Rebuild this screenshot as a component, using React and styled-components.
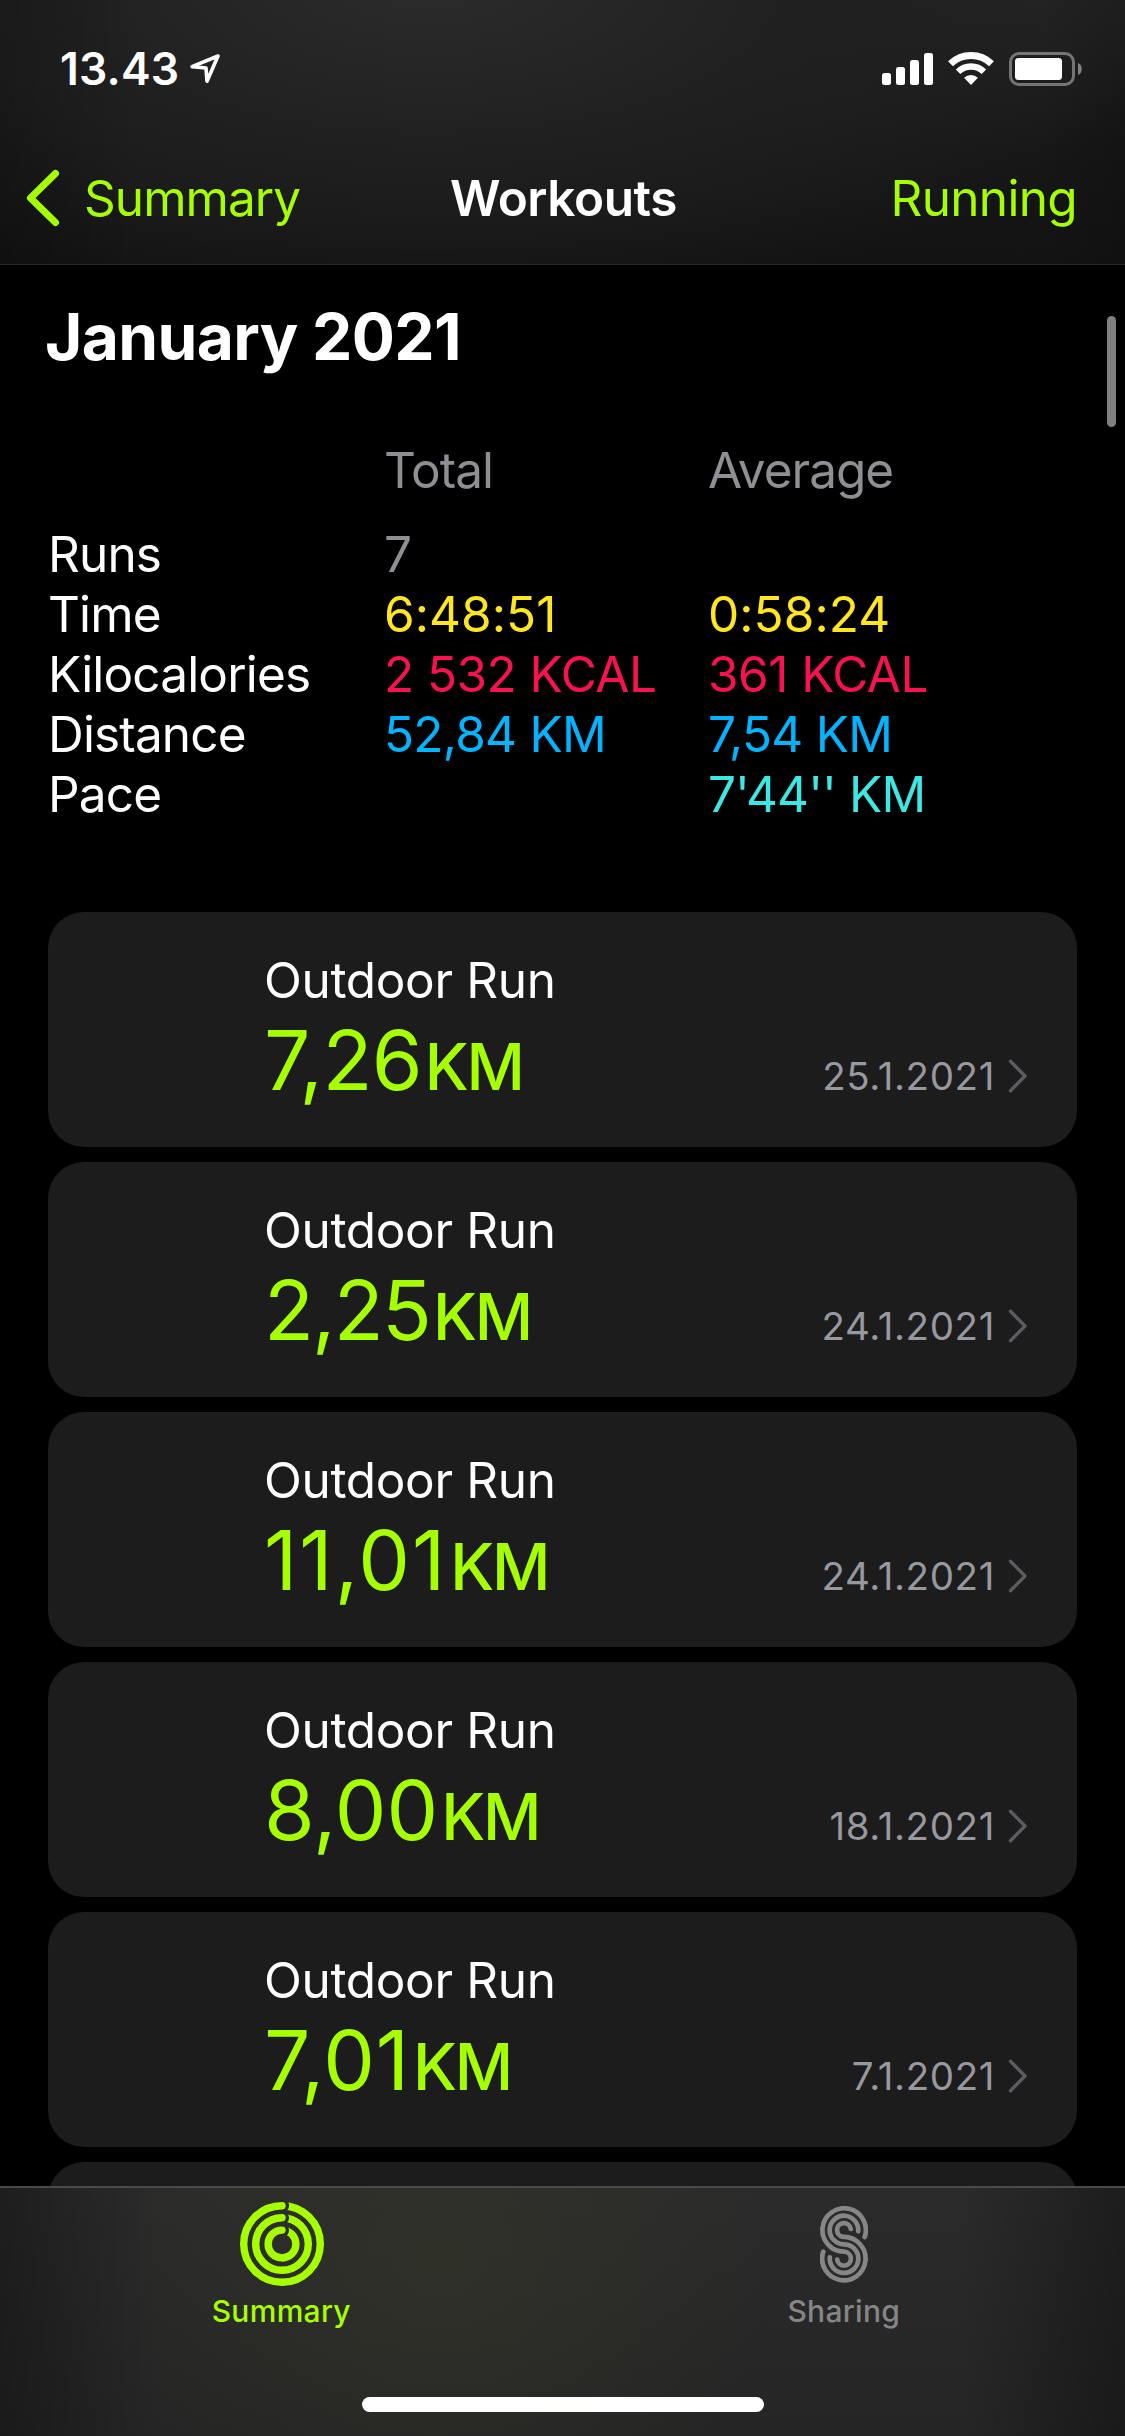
import React from 'react';
import styled, { createGlobalStyle } from 'styled-components';

const GlobalStyle = createGlobalStyle`
  * {
    box-sizing: border-box;
  }

  body {
    margin: 0;
    background: #000;
    font-family: Inter, "Liberation Sans", sans-serif;
    font-feature-settings: 'calt' 0;
    -webkit-font-smoothing: antialiased;
  }
`;

const stats = [
  { label: 'Runs', total: '7', color: '#8e8e93', spacing: '-0.02em' },
  { label: 'Time', total: '6:48:51', average: '0:58:24', color: '#ffe620', spacing: '0.001em' },
  { label: 'Kilocalories', total: '2 532 KCAL', average: '361 KCAL', color: '#fa114f', spacing: '-0.011em' },
  { label: 'Distance', total: '52,84 KM', average: '7,54 KM', color: '#00b4ff', spacing: '-0.015em' },
  { label: 'Pace', average: "7'44'' KM", color: '#3ce8e4', spacing: '-0.018em' },
];

const workouts = [
  { distance: '7,26', date: '25.1.2021', spacing: '-0.7px' },
  { distance: '2,25', date: '24.1.2021', spacing: '-1.9px' },
  { distance: '11,01', date: '24.1.2021', spacing: '2px' },
  { distance: '8,00', date: '18.1.2021', spacing: '0.1px' },
  { distance: '7,01', date: '7.1.2021', spacing: '0.8px' },
];

const LocationIcon = () => (
  <svg width="32" height="32" viewBox="0 0 32 32" fill="none" stroke="#fff" strokeWidth="3.6" strokeLinejoin="round">
    <path d="M29 3 L3 13.6 L17 15 L18 28.2 Z" />
  </svg>
);

const SignalIcon = () => (
  <svg width="51" height="32" viewBox="0 0 51 32" fill="#fff">
    <rect x="0" y="20" width="9" height="12" rx="2.5" />
    <rect x="14" y="14" width="9" height="18" rx="2.5" />
    <rect x="28" y="7" width="9" height="25" rx="2.5" />
    <rect x="42" y="0" width="9" height="32" rx="2.5" />
  </svg>
);

const WifiIcon = () => (
  <svg width="46" height="34" viewBox="0 0 46 34" fill="none" stroke="#fff">
    <path d="M2.5 11.8 A29.5 29.5 0 0 1 43.5 11.8" strokeWidth="7" />
    <path d="M10.1 19.7 A18.5 18.5 0 0 1 35.9 19.7" strokeWidth="6.4" />
    <path d="M16.1 25.8 A10 10 0 0 1 29.9 25.8 L23 33 Z" fill="#fff" stroke="none" />
  </svg>
);

const BatteryIcon = () => (
  <svg width="74" height="34" viewBox="0 0 74 34">
    <rect x="1.5" y="1.5" width="63" height="31" rx="8.5" fill="none" stroke="#757575" strokeWidth="3" />
    <rect x="6" y="6" width="47" height="22" rx="3.5" fill="#fff" />
    <path d="M69 11 C74 12.5 74 21.5 69 23 Z" fill="#828282" />
  </svg>
);

const BackIcon = () => (
  <svg width="34" height="58" viewBox="0 0 34 58" fill="none" stroke="#a6ff00" strokeWidth="7" strokeLinecap="round" strokeLinejoin="round">
    <path d="M29.5 4.5 L4.5 29 L29.5 53.5" />
  </svg>
);

const ChevronIcon = () => (
  <svg width="20" height="34" viewBox="0 0 20 34" fill="none" stroke="#5c5c60" strokeWidth="3.4" strokeLinecap="round" strokeLinejoin="round">
    <path d="M2.5 2.2 L17 17 L2.5 31.8" />
  </svg>
);

const rings = [38.3, 26.3, 13.9];

const RingsIcon = () => (
  <svg width="84" height="84" viewBox="0 0 84 84" fill="none" stroke="currentColor" strokeWidth="7.4">
    <mask id="ring-gap" maskUnits="userSpaceOnUse" x="0" y="0" width="84" height="84">
      <rect width="84" height="84" fill="#fff" stroke="none" />
      {rings.map((r) => (
        <circle key={r} cx="42.3" cy={42 - r} r="6.8" fill="#000" stroke="none" />
      ))}
    </mask>
    {rings.map((r) => (
      <React.Fragment key={r}>
        <path d={`M42 ${42 - r} A${r} ${r} 0 0 1 42 ${42 + r}`} mask="url(#ring-gap)" />
        <path d={`M42 ${42 + r} A${r} ${r} 0 0 1 42 ${42 - r}`} strokeLinecap="round" />
      </React.Fragment>
    ))}
  </svg>
);

const SharingIcon = () => (
  <svg width="48" height="77" viewBox="0 0 48 77" fill="none" stroke="currentColor" strokeWidth="4.7" strokeLinecap="round">
    <path d="M44.7 31 A21.7 21.7 0 1 0 24 45.7 A6.9 6.9 0 1 1 17.2 53.6" />
    <path d="M38.2 25.3 A14.3 14.3 0 1 0 24 38.3 A14.3 14.3 0 1 1 9.8 51.3" />
    <path d="M30.8 23 A6.9 6.9 0 1 0 24 30.9 A21.7 21.7 0 1 1 3.3 45.6" />
  </svg>
);

const App = () => {
  return (
    <Screen>
      <GlobalStyle />
      <Header>
        <StatusBar>
          <Clock>13.43</Clock>
          <LocationIcon />
          <StatusIcons>
            <SignalIcon />
            <WifiIcon />
            <BatteryIcon />
          </StatusIcons>
        </StatusBar>
        <NavBar>
          <BackButton>
            <BackIcon />
            Summary
          </BackButton>
          <NavTitle>Workouts</NavTitle>
          <FilterButton>Running</FilterButton>
        </NavBar>
      </Header>

      <Content>
        <MonthTitle>January 2021</MonthTitle>
        <StatsTable>
          <StatsHeader>
            <span />
            <span>Total</span>
            <span>Average</span>
          </StatsHeader>
          {stats.map((row) => (
            <StatsRow key={row.label}>
              <StatLabel>{row.label}</StatLabel>
              <StatValue $color={row.color} $spacing={row.spacing}>{row.total}</StatValue>
              <StatValue $color={row.color} $spacing={row.spacing}>{row.average}</StatValue>
            </StatsRow>
          ))}
        </StatsTable>
        <WorkoutList>
          {workouts.map((workout) => (
            <WorkoutCard key={workout.distance}>
              <WorkoutName>Outdoor Run</WorkoutName>
              <WorkoutDetails>
                <Distance $spacing={workout.spacing}>
                  {workout.distance}
                  <Unit>KM</Unit>
                </Distance>
                <WorkoutDate>
                  {workout.date}
                  <ChevronIcon />
                </WorkoutDate>
              </WorkoutDetails>
            </WorkoutCard>
          ))}
          <WorkoutCard />
        </WorkoutList>
        <ScrollThumb />
      </Content>

      <TabBar>
        <Tabs>
          <Tab $active>
            <TabIcon>
              <RingsIcon />
            </TabIcon>
            Summary
          </Tab>
          <Tab>
            <TabIcon>
              <SharingIcon />
            </TabIcon>
            Sharing
          </Tab>
        </Tabs>
        <HomeIndicator />
      </TabBar>
    </Screen>
  );
};

const Screen = styled.div`
  display: flex;
  flex-direction: column;
  width: 1125px;
  height: 2436px;
  overflow: hidden;
  background: #000;
  color: #fff;
`;

const Header = styled.header`
  flex: none;
  height: 265px;
  border-bottom: 1px solid #262626;
  background:
    linear-gradient(90deg, rgba(0, 0, 0, 0.2), rgba(0, 0, 0, 0) 140px, rgba(0, 0, 0, 0) 1040px, rgba(0, 0, 0, 0.15)),
    radial-gradient(ellipse 760px 330px at 430px -20px, #2c2c2c, #202020 50%, rgba(24, 24, 24, 0) 100%),
    linear-gradient(#242424, #171717 55%, #131313);
`;

const StatusBar = styled.div`
  display: flex;
  align-items: center;
  height: 138px;
  padding: 0 42px 0 60px;

  > svg {
    margin-left: 10px;
  }
`;

const Clock = styled.span`
  font-size: 44.5px;
  font-weight: 600;
  line-height: 54px;
  letter-spacing: 0.004em;
`;

const StatusIcons = styled.div`
  display: flex;
  align-items: center;
  gap: 15px;
  margin-left: auto;
`;

const NavBar = styled.nav`
  display: grid;
  grid-template-columns: 1fr auto 1fr;
  align-items: center;
  height: 120px;
  padding: 0 48px;
  font-size: 49.5px;
  line-height: 60px;
`;

const BackButton = styled.div`
  display: flex;
  align-items: center;
  gap: 24px;
  margin-left: -22px;
  color: #a6ff00;
  letter-spacing: -0.019em;
`;

const NavTitle = styled.div`
  padding-left: 2px;
  font-weight: 600;
  letter-spacing: -0.009em;
`;

const FilterButton = styled.div`
  text-align: right;
  color: #a6ff00;
  letter-spacing: -0.0135em;
`;

const Content = styled.main`
  position: relative;
  flex: 1;
  min-height: 0;
  overflow: hidden;
  padding: 33px 48px 0;
`;

const MonthTitle = styled.h1`
  margin: 0 0 64px -3px;
  font-size: 64px;
  font-weight: 700;
  line-height: 78px;
  letter-spacing: -0.01em;
`;

const StatsTable = styled.div`
  font-size: 49.5px;
  line-height: 60px;
`;

const StatsRow = styled.div`
  display: grid;
  grid-template-columns: 336px 324px 1fr;
  height: 60px;
  white-space: nowrap;
`;

const StatsHeader = styled(StatsRow)`
  margin-bottom: 24px;
  color: #8e8e93;
  letter-spacing: -0.02em;
`;

const StatLabel = styled.span`
  letter-spacing: -0.017em;
`;

const StatValue = styled.span`
  color: ${(props) => props.$color};
  letter-spacing: ${(props) => props.$spacing};
`;

const WorkoutList = styled.div`
  display: flex;
  flex-direction: column;
  gap: 15px;
  margin-top: 88px;
`;

const WorkoutCard = styled.article`
  flex: none;
  height: 235px;
  padding: 38px 49px 0 216px;
  border-radius: 36px;
  background: #1c1c1d;
`;

const WorkoutName = styled.div`
  font-size: 49.5px;
  line-height: 60px;
  letter-spacing: -0.007em;
`;

const WorkoutDetails = styled.div`
  display: flex;
  align-items: baseline;
  justify-content: space-between;
  margin-top: 3px;
`;

const Distance = styled.div`
  color: #a6ff00;
  font-size: 82px;
  line-height: 96px;
  letter-spacing: ${(props) => props.$spacing};
`;

const Unit = styled.span`
  margin-left: 3px;
  font-size: 64px;
  font-weight: 500;
  letter-spacing: -0.035em;
`;

const WorkoutDate = styled.div`
  display: flex;
  align-items: center;
  gap: 13px;
  color: #98989f;
  font-size: 38.5px;
  line-height: 48px;
  letter-spacing: 0.016em;
`;

const ScrollThumb = styled.div`
  position: absolute;
  top: 51px;
  right: 9px;
  width: 9px;
  height: 111px;
  border-radius: 5px;
  background: #808080;
`;

const TabBar = styled.footer`
  display: flex;
  flex-direction: column;
  align-items: center;
  flex: none;
  height: 250px;
  border-top: 2px solid #4a4a4b;
  background:
    linear-gradient(90deg, rgba(0, 0, 0, 0.3), rgba(0, 0, 0, 0) 160px, rgba(0, 0, 0, 0) 960px, rgba(0, 0, 0, 0.32)),
    radial-gradient(ellipse 330px 300px at 440px 70px, rgba(50, 52, 40, 0.7), rgba(45, 46, 40, 0)),
    linear-gradient(#2b2b2b, #252525);
`;

const Tabs = styled.div`
  display: flex;
  align-self: stretch;
`;

const Tab = styled.div`
  display: flex;
  flex: 1;
  flex-direction: column;
  align-items: center;
  color: ${(props) => (props.$active ? '#a6ff00' : '#868686')};
  font-size: 30px;
  font-weight: 500;
  line-height: 36px;
  letter-spacing: 0.01em;
`;

const TabIcon = styled.div`
  display: flex;
  align-items: center;
  height: 84px;
  margin: 14px 0 7px 1px;
`;

const HomeIndicator = styled.div`
  width: 402px;
  height: 15px;
  margin: 68px 0 0 1px;
  border-radius: 8px;
  background: #fff;
`;

export default App;
